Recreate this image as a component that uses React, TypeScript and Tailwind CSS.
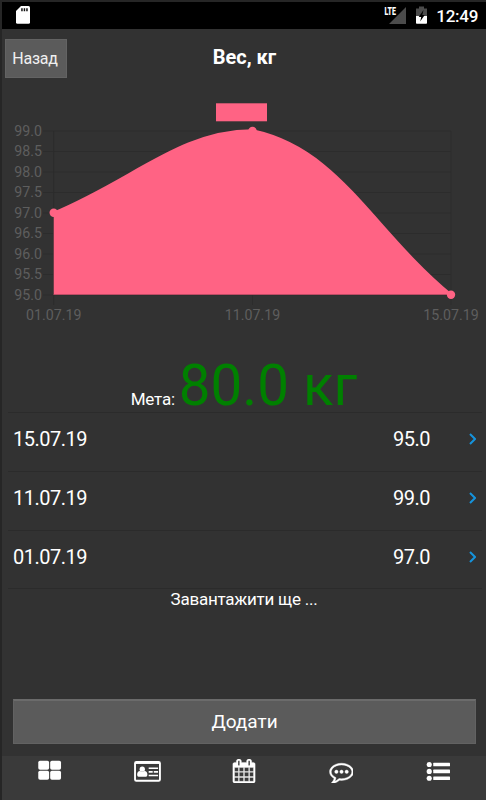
import type { ReactNode } from "react"

const records = [
  { date: "15.07.19", value: "95.0" },
  { date: "11.07.19", value: "99.0" },
  { date: "01.07.19", value: "97.0" },
]

const yLabels = ["99.0", "98.5", "98.0", "97.5", "97.0", "96.5", "96.0", "95.5", "95.0"]

const xLabels = [
  { x: 53.7, text: "01.07.19" },
  { x: 252.5, text: "11.07.19" },
  { x: 451, text: "15.07.19" },
]

const StatusBar = () => (
  <div className="h-[27px] bg-black flex items-center justify-between pl-[14px] pr-[8px] text-white">
    <svg width="14" height="18" viewBox="0 0 14 18" className="-mt-px">
      <path d="M5 0h7.500q1.500 0 1.500 1.500v14.800q0 1.500-1.500 1.500h-11q-1.500 0-1.500-1.500V5z" fill="#fff" />
      <path d="M5.200 2.200h1.500v3H5.200zM7.700 2.200h1.500v3H7.700zM10.200 2.200h1.500v3h-1.500z" fill="#111" />
    </svg>
    <div className="flex items-center">
      <svg width="44" height="20" viewBox="0 0 44 20" className="mr-[8px] -mt-[3px]">
        <path d="M22 3v17H5z" fill="#4b4b4b" />
        <text x="0.500" y="11" fontSize="11" fontWeight="900" textLength="11.500" lengthAdjust="spacingAndGlyphs" fill="#fff">LTE</text>
        <path d="M35 2.500h5v2h3V12H32V4.500h3z" fill="#4b4b4b" />
        <path d="M32 12h11v7q0 .8-.8.8h-9.400q-.8 0-.8-.8z" fill="#fff" />
        <path d="M39.500 6l-4.800 7h2.500l-1 4.500 4.500-6.500h-2.400z" fill="#000" />
      </svg>
      <span className="text-[17px] leading-none font-medium tracking-[-0.3px] mt-[2px]">12:49</span>
    </div>
  </div>
)

const Chart = () => (
  <svg width="484" height="240" viewBox="2 90 484 240" className="block" fontSize="14.200">
    <rect x="216" y="103.300" width="51" height="18" fill="#ff6384" />
    {yLabels.map((label, i) => (
      <g key={label}>
        <path d={`M43 ${131 + i * 20.5}H451`} stroke="#2c2c2c" />
        <text x="42" y={135.8 + i * 20.5} textAnchor="end" fill="#5e5e5e">{label}</text>
      </g>
    ))}
    {xLabels.map((label) => (
      <g key={label.text}>
        <path d={`M${label.x} 131V305`} stroke="#2c2c2c" />
        <text x={label.x} y="319.500" textAnchor="middle" fill="#5e5e5e">{label.text}</text>
      </g>
    ))}
    <path d="M53.700 212.800C133.200 180 180.300 130.500 252.500 130.500C339.100 148.500 371.600 229 451 294.700H53.700z" fill="#ff6384" />
    <path d="M53.700 212.800C133.200 180 180.300 130.500 252.500 130.500C339.100 148.500 371.600 229 451 294.700" fill="none" stroke="#ff6384" strokeWidth="2.500" />
    <path d="M53.700 294.500H451" stroke="#bd4c65" />
    <circle cx="53.700" cy="212.800" r="4.200" fill="#ff6384" />
    <circle cx="252.500" cy="131" r="4.200" fill="#ff6384" />
    <circle cx="451" cy="294.800" r="4.200" fill="#ff6384" />
  </svg>
)

const Tab = ({ width = 24, children }: { width?: number; children: ReactNode }) => (
  <div className="flex-1 flex justify-center pt-[3px]">
    <svg width={width} height="24" viewBox={width === 24 ? "0 0 1792 1792" : "0 0 2048 1792"} fill="#fff">
      {children}
    </svg>
  </div>
)

const TabBar = () => (
  <div className="h-[44px] bg-[#3a3a3a] flex">
    <Tab>
      <g>
        <rect x="20" y="130" width="810" height="670" rx="128" />
        <rect x="20" y="880" width="810" height="670" rx="128" />
        <rect x="910" y="130" width="810" height="670" rx="128" />
        <rect x="910" y="880" width="810" height="670" rx="128" />
      </g>
    </Tab>
    <Tab width={28}>
      <rect x="130" y="220" width="1860" height="1408" rx="100" fill="none" stroke="#fff" strokeWidth="140" />
      <path d="M130 220h1860v150H130z" />
      <circle cx="670" cy="760" r="200" />
      <path d="M510 890q160 130 320 0q224 20 224 290q0 150-110 150H396q-110 0-110-150q0-270 224-290z" />
      <path d="M1150 630h700v125h-700zM1150 900h300v125h-300zM1530 900h320v125h-320zM1150 1170h700v125h-700z" />
    </Tab>
    <Tab>
      <path d="M192 1664h288v-288h-288v288zm352 0h320v-288h-320v288zm-352-352h288v-320h-288v320zm352 0h320v-320h-320v320zm-352-384h288v-288h-288v288zm736 736h320v-288h-320v288zm-384-736h320v-288h-320v288zm768 736h288v-288h-288v288zm-384-352h320v-320h-320v320zm-352-864v-288q0-13-9.500-22.500t-22.500-9.500h-64q-13 0-22.500 9.500t-9.500 22.500v288q0 13 9.500 22.500t22.500 9.500h64q13 0 22.500-9.500t9.500-22.500zm736 864h288v-320h-288v320zm-384-384h320v-288h-320v288zm384 0h288v-288h-288v288zm32-480v-288q0-13-9.500-22.500t-22.500-9.500h-64q-13 0-22.500 9.500t-9.500 22.500v288q0 13 9.500 22.500t22.500 9.500h64q13 0 22.500-9.500t9.500-22.500zm384-64v1280q0 52-38 90t-90 38h-1408q-52 0-90-38t-38-90v-1280q0-52 38-90t90-38h128v-96q0-66 47-113t113-47h64q66 0 113 47t47 113v96h384v-96q0-66 47-113t113-47h64q66 0 113 47t47 113v96h128q52 0 90 38t38 90z" stroke="#fff" strokeWidth="24" />
    </Tab>
    <Tab>
      <g transform="translate(40 60)" stroke="#fff" strokeWidth="30">
        <circle cx="512" cy="896" r="128" />
        <circle cx="896" cy="896" r="128" />
        <circle cx="1280" cy="896" r="128" />
        <path d="M896 384q-204 0-381.500 69.500t-282 187.500-104.500 255q0 112 71.500 213.500t201.500 175.500l87 50-27 96q-24 91-70 172 152-63 275-171l43-38 57 6q69 8 130 8 204 0 381.500-69.500t282-187.500 104.500-255-104.500-255-282-187.500-381.500-69.500zm896 512q0 174-120 321.500t-326 233-450 85.500q-70 0-145-8-198 175-460 242-49 14-114 22h-5q-15 0-27-10.500t-16-27.500v-1q-3-4-.5-12t2-10 4.500-9.500l6-9 7-8.500 8-9q7-8 31-34.500t34.500-38 31-39.500 32.500-51 27-59 26-76q-157-89-247.500-220t-90.500-281q0-174 120-321.500t326-233 450-85.500 450 85.500 326 233 120 321.500z" />
      </g>
    </Tab>
    <Tab>
      <g transform="translate(50 30)">
        <circle cx="192" cy="384" r="192" />
        <circle cx="192" cy="896" r="192" />
        <circle cx="192" cy="1408" r="192" />
        <rect x="490" y="250" width="1252" height="268" rx="40" />
        <rect x="490" y="762" width="1252" height="268" rx="40" />
        <rect x="490" y="1274" width="1252" height="268" rx="40" />
      </g>
    </Tab>
  </div>
)

const App = () => {
  return (
    <div className="w-[486px] h-[800px] bg-[#323232] border-l-2 border-t-2 border-[#262626] flex flex-col text-white font-['Roboto','Liberation_Sans',sans-serif] overflow-hidden">
      <StatusBar />
      <div className="h-[61px] grid grid-cols-3 items-center px-[3px]">
        <button className="w-[62px] h-[39px] -mt-[2px] pr-[2px] bg-[#5b5b5b] border border-[#636363] text-[16px] tracking-[-0.2px] text-[#f0f0f0]">Назад</button>
        <p className="text-center text-[20px] font-bold -mt-[5px] pl-px">Вес, кг</p>
      </div>
      <Chart />
      <div className="h-[82px] flex justify-center items-baseline">
        <span className="text-[17px] tracking-[-0.2px] mr-[4px]">Мета:</span>
        <span className="text-[56.5px] leading-[113px] text-[#008000]">80.0 кг</span>
      </div>
      <div className="mx-[6px] mr-[4px] border-t border-[#2b2b2b]">
        {records.map((item) => (
          <div key={item.date} className="h-[59px] last:h-[58px] border-b border-[#2b2b2b] flex items-center pl-[5px] pr-[6px] pb-[6px] last:pb-[5px] text-[20px] tracking-[-0.5px]">
            <span className="flex-1">{item.date}</span>
            <span className="mr-[39px]">{item.value}</span>
            <svg width="7" height="12" viewBox="0 0 7 12" fill="none" stroke="#1593dc" strokeWidth="2">
              <path d="M1 1l5 5-5 5" />
            </svg>
          </div>
        ))}
      </div>
      <p className="text-center text-[17px] tracking-[-0.25px] leading-[21px]">Завантажити ще ...</p>
      <div className="flex-1" />
      <button className="mx-[11px] mr-[10px] mb-[12px] h-[45px] shrink-0 bg-[#5b5b5b] border border-[#626262] border-t-2 border-t-[#6b6b6b] text-[19px]">Додати</button>
      <TabBar />
    </div>
  )
}

export default App
